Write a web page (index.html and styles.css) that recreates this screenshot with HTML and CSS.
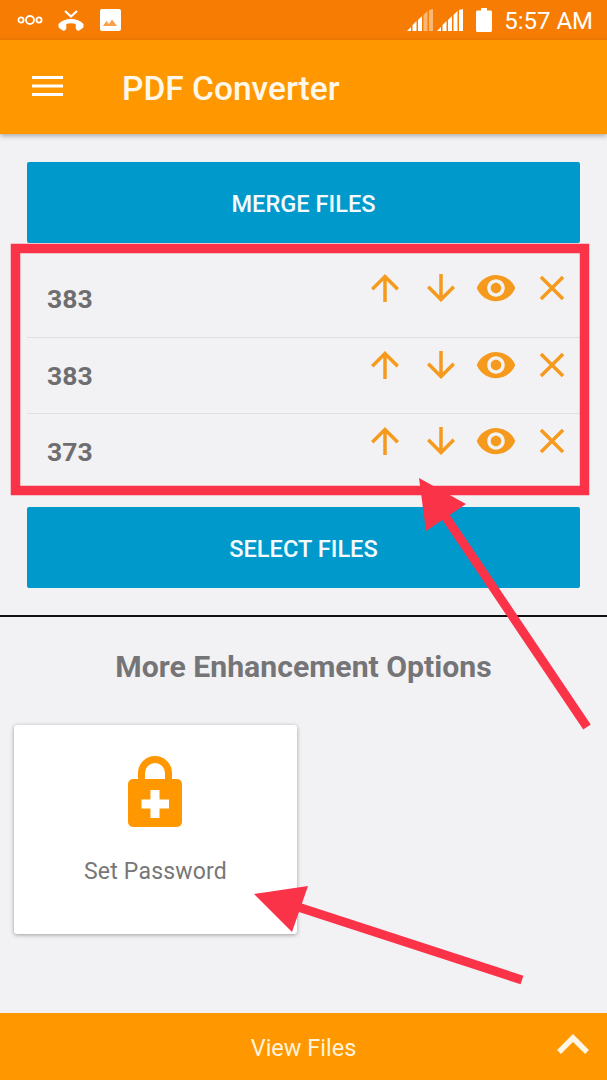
FILE: index.html
```html
<!DOCTYPE html>
<html>
<head>
  <title>PDF Converter</title>
  <link rel="stylesheet" href="styles.css">
</head>
<body>
  <svg class="defs" width="0" height="0">
    <symbol id="ic-up" viewBox="0 0 24 24"><path d="M4 12l1.41 1.41L11 7.83V20h2V7.83l5.58 5.59L20 12l-8-8-8 8z"/></symbol>
    <symbol id="ic-down" viewBox="0 0 24 24"><path d="M20 12l-1.41-1.41L13 16.17V4h-2v12.17l-5.58-5.59L4 12l8 8 8-8z"/></symbol>
    <symbol id="ic-eye" viewBox="0 0 24 24"><path d="M12 4.5C7 4.5 2.73 7.61 1 12c1.73 4.39 6 7.5 11 7.5s9.27-3.11 11-7.5c-1.73-4.39-6-7.5-11-7.5zM12 17c-2.76 0-5-2.24-5-5s2.24-5 5-5 5 2.24 5 5-2.24 5-5 5zm0-8c-1.66 0-3 1.34-3 3s1.34 3 3 3 3-1.34 3-3-1.34-3-3-3z"/></symbol>
    <symbol id="ic-close" viewBox="0 0 24 24"><path d="M19 6.41L17.59 5 12 10.59 6.41 5 5 6.41 10.59 12 5 17.59 6.41 19 12 13.41 17.59 19 19 17.59 13.41 12z"/></symbol>
  </svg>

  <div class="statusbar">
    <div class="status-left">
      <svg width="26" height="10" viewBox="0 0 26 10" fill="none" stroke="#fff" stroke-width="1.8"><circle cx="4" cy="5" r="2.6"/><circle cx="13" cy="5" r="4"/><circle cx="22" cy="5" r="2.6"/></svg>
      <svg class="status-phone" width="26" height="22" viewBox="0 0 26 22"><path d="M7 1l6 5.5L19 1" fill="none" stroke="#fff" stroke-width="2.2"/><path d="M13 9C8 9 3.5 10.500 .5 14v2.500c0 .8.5 1.500 1.300 2l3 2c.8.5 2 .3 2.500-.5l1-1.500v-4.500c3-1 6.400-1 9.400 0V18.500l1 1.500c.5.8 1.700 1 2.500.5l3-2c.8-.5 1.300-1.200 1.300-2V14C22.500 10.500 18 9 13 9z" fill="#fff"/></svg>
      <svg class="status-photo" width="21" height="22" viewBox="0 0 21 22"><rect width="21" height="22" rx="2" fill="#fff"/><path d="M3 17l3.500-5 2.500 3 3-4.500 5 6.500z" fill="#f8a04a"/></svg>
    </div>
    <div class="status-right">
      <svg width="27" height="22" viewBox="0 0 27 22" fill="#fff"><path d="M0 22l4-4v4zM5.500 22v-6l4-4v10zM11 22V11l4-4v15z"/><path d="M16.500 22V6l4-4v20zM22 22V1l4-1v22z" opacity=".45"/></svg>
      <svg class="status-signal2" width="27" height="22" viewBox="0 0 27 22" fill="#fff"><path d="M0 22l4-4v4zM5.500 22v-6l4-4v10zM11 22V11l4-4v15zM16.500 22V6l4-4v20zM22 22V1l4-1v22z"/></svg>
      <svg class="status-battery" width="16" height="24" viewBox="0 0 16 24"><path d="M5 0h6v2.500h3.500c.8 0 1.500.7 1.500 1.500v18.500c0 .8-.7 1.500-1.500 1.500h-13C.7 24 0 23.300 0 22.500V4c0-.8.7-1.500 1.500-1.500H5z" fill="#fff"/></svg>
      <span class="status-time">5:57 AM</span>
    </div>
  </div>

  <div class="toolbar">
    <svg class="menu-icon" width="31" height="20" viewBox="0 0 31 20" fill="#fff"><rect width="31" height="3"/><rect y="8.500" width="31" height="3"/><rect y="17" width="31" height="3"/></svg>
    <span class="toolbar-title">PDF Converter</span>
  </div>

  <div class="main">
    <div class="action-btn">MERGE FILES</div>

    <div class="file-list">
      <div class="file-row">
        <span class="file-name">383</span>
        <div class="file-actions">
          <svg><use href="#ic-up"/></svg>
          <svg><use href="#ic-down"/></svg>
          <svg><use href="#ic-eye"/></svg>
          <svg><use href="#ic-close"/></svg>
        </div>
      </div>
      <div class="file-row">
        <span class="file-name">383</span>
        <div class="file-actions">
          <svg><use href="#ic-up"/></svg>
          <svg><use href="#ic-down"/></svg>
          <svg><use href="#ic-eye"/></svg>
          <svg><use href="#ic-close"/></svg>
        </div>
      </div>
      <div class="file-row">
        <span class="file-name">373</span>
        <div class="file-actions">
          <svg><use href="#ic-up"/></svg>
          <svg><use href="#ic-down"/></svg>
          <svg><use href="#ic-eye"/></svg>
          <svg><use href="#ic-close"/></svg>
        </div>
      </div>
    </div>

    <div class="action-btn">SELECT FILES</div>

    <div class="divider"></div>

    <h2 class="options-title">More Enhancement Options</h2>

    <div class="option-card">
      <svg class="lock-icon" width="54" height="71" viewBox="0 0 54 71">
        <path d="M13.500 26V17a13.500 13.500 0 0 1 27 0v9" fill="none" stroke="#ff9800" stroke-width="7"/>
        <rect y="23" width="54" height="48" rx="5" fill="#ff9800"/>
        <path d="M22.500 34h9v9.500H41v9h-9.500V62h-9v-9.500H13.500v-9h9z" fill="#fff"/>
      </svg>
      <span class="option-label">Set Password</span>
    </div>

    <div class="bottom-bar">
      <span>View Files</span>
      <svg class="bottom-chevron" width="34" height="22" viewBox="0 0 34 22"><path d="M3 19L17 5l14 14" fill="none" stroke="#fff6e6" stroke-width="5.500"/></svg>
    </div>
  </div>

  <!-- annotations drawn on top of the screenshot -->
  <svg class="annotations" width="607" height="1080" viewBox="0 0 607 1080">
    <rect x="15.500" y="248.500" width="569" height="242" fill="none" stroke="#fb3349" stroke-width="9.500"/>
    <path d="M587 727L441 510" stroke="#fb3349" stroke-width="9" fill="none"/>
    <path d="M419 478l47 26-40 27z" fill="#fb3349"/>
    <path d="M522 980L295 906" stroke="#fb3349" stroke-width="9" fill="none"/>
    <path d="M254 894l54-8-16 46z" fill="#fb3349"/>
  </svg>
</body>
</html>
```

FILE: styles.css
```css
html, body { margin: 0; padding: 0; }
body {
  position: relative;
  width: 607px;
  height: 1080px;
  overflow: hidden;
  display: flex;
  flex-direction: column;
  font-family: Roboto, sans-serif;
  background: #f2f2f5;
}
h2 { margin: 0; }
.defs { display: block; height: 0; }

.statusbar {
  height: 40px;
  flex: none;
  display: flex;
  justify-content: space-between;
  align-items: center;
  background: #f67c04;
  color: #fff;
}
.status-left { display: flex; align-items: center; gap: 15px; padding-left: 17px; }
.status-phone { margin-top: 2px; }
.status-photo { margin-left: 1px; }
.status-right { display: flex; align-items: center; padding-right: 14px; }
.status-signal2 { margin-left: 3px; }
.status-battery { margin-left: 12px; }
.status-time { margin-left: 12px; padding-top: 2px; font-size: 24px; line-height: 26px; }

.toolbar {
  height: 94px;
  flex: none;
  display: flex;
  align-items: center;
  padding-left: 32px;
  background: #ff9800;
  box-shadow: 0 2px 5px rgba(0, 0, 0, 0.3);
  z-index: 1;
}
.menu-icon { margin-top: -3px; }
.toolbar-title { margin: 2px 0 0 59px; font-size: 33.5px; font-weight: 500; color: #fff8ea; }

.main { flex: 1; display: flex; flex-direction: column; padding-top: 28px; }

.action-btn {
  height: 81px;
  margin: 0 27px;
  padding-top: 2px;
  box-sizing: border-box;
  flex: none;
  display: flex;
  align-items: center;
  justify-content: center;
  background: #0099cc;
  border-radius: 2px;
  color: #f4fbfe;
  font-size: 23.6px;
  font-weight: 500;
}

.file-list { height: 264px; flex: none; box-sizing: border-box; margin: 0 27px; padding-top: 18px; }
.file-row {
  height: 76.5px;
  box-sizing: border-box;
  display: flex;
  justify-content: space-between;
  border-bottom: 1px solid #e0e0e2;
}
.file-row:last-child { border-bottom: none; }
.file-name { padding: 23px 0 0 20px; font-size: 26.5px; line-height: 30px; font-weight: 700; color: #6e6e70; }
.file-actions {
  width: 223px;
  padding-top: 6px;
  display: grid;
  grid-template-columns: repeat(4, 1fr);
  justify-items: center;
  align-items: start;
}
.file-actions svg { width: 42px; height: 42px; fill: #f59a1c; }

.divider { height: 2px; margin-top: 27px; flex: none; background: #111; box-shadow: 0 0 2px #fff; }

.options-title { margin-top: 33px; text-align: center; font-size: 30.2px; line-height: 34px; font-weight: 700; color: #757577; }

.option-card {
  width: 283px;
  height: 209px;
  margin: 41px 0 0 14px;
  flex: none;
  box-sizing: border-box;
  padding-top: 31px;
  display: flex;
  flex-direction: column;
  align-items: center;
  background: #fff;
  border-radius: 3px;
  box-shadow: 0 1px 4px rgba(0, 0, 0, 0.35);
}
.lock-icon { margin-left: -2px; }
.option-label { margin-top: 31px; font-size: 23px; line-height: 28px; color: #777; letter-spacing: 0.2px; }

.bottom-bar {
  position: absolute;
  left: 0;
  right: 0;
  bottom: 0;
  height: 67px;
  box-sizing: border-box;
  padding-top: 2px;
  display: flex;
  align-items: center;
  justify-content: center;
  background: #ff9800;
  color: #fff3dc;
  font-size: 23.5px;
}
.bottom-chevron { position: absolute; right: 17px; top: 20px; }

.annotations { position: absolute; left: 0; top: 0; z-index: 2; pointer-events: none; }
```
